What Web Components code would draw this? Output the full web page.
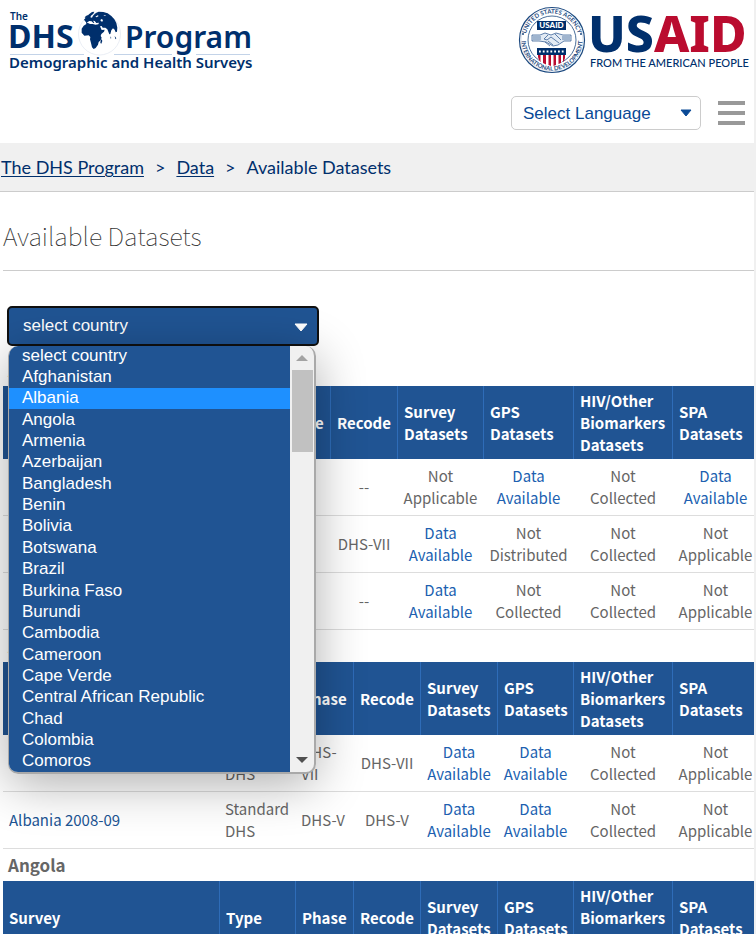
<!DOCTYPE html>
<html lang="en">
<head>
<meta charset="utf-8">
<title>The DHS Program - Available Datasets</title>
<style>
  html { background: #f0f0f0; }
  body { margin: 0 2px 0 0; background: #fff; min-height: 100vh; overflow: hidden; height: 100vh; }
</style>
</head>
<body>
<dhs-page></dhs-page>
<script>
const define = (name, html, setup) => {
  const template = document.createElement('template');
  template.innerHTML = html;
  customElements.define(name, class extends HTMLElement {
    constructor() {
      super();
      this.attachShadow({ mode: 'open' }).append(template.content.cloneNode(true));
    }
    connectedCallback() { if (setup) setup(this, this.shadowRoot); }
  });
};

define('dhs-logo', `
<style>:host{display:block} a{display:block} svg{display:block}</style>
<a href="#" aria-label="The DHS Program">
<svg width="254" height="72" viewBox="0 0 254 72" fill="#002f6c" font-family="'Noto Sans',sans-serif">
  <path d="M10 53.5H84M114 53.5H172M196 53.5H250" stroke="#c3d3e8" fill="none"/>
  <text x="10" y="19" font-size="10" font-weight="600">The</text>
  <text x="8" y="47" font-size="32" font-weight="700">DHS</text>
  <text x="125" y="47" font-size="30" font-weight="600">Program</text>
  <text x="9" y="67" font-size="15" font-weight="600">Demographic and Health Surveys</text>
  <circle cx="99.500" cy="33" r="21" fill="#fff" stroke="#dbe3ee" stroke-width=".6"/>
  <g transform="translate(74 6) scale(.3333)">
    <path d="M30 38l7-8 8-8 9-7 7-1-3 6-7 6-2 5 5 1 3-6 5-5 5-4 7-3 14 1 13 4 11 8 9 10 6 11 3 14-1 12-4 2-3-8-5-4-5 6-3 11-3 1-6-15-6-5-8 0-3-5-5 1 5 11 9-1-2 6-8 7-2 6 3 5-3 8-6 5-2 8-7 10-6 3-5-5-3-13-3-11 1-7-5-5-13 1-8-9 0-12 6-9 8-5-1-5z"/>
    <path d="M38 47l8-5 7 1 5 5 3-1-4-6 5 1 5 6 8-1-2 5-8 1-9-2-8 0-6-3zM79 39l4-3 4 3-2 5-4-1zM64 29l7-4 3 2-6 4zM88 24l8 1-3 2z" fill="#fff"/>
    <path d="M83 96l2 6-3 8-3-2 1-7zM109 88l3 5-2 2zM122 87l5 7-3 3zM32 31l5-5 6-2-3 5-6 4z"/>
  </g>
</svg></a>`);

define('usaid-logo', `
<style>:host{display:block} a{display:block} svg{display:block}</style>
<a href="#" aria-label="USAID">
<svg width="236" height="72" viewBox="0 0 236 72" font-family="Lato,sans-serif">
  <defs>
    <path id="top" d="M7.500 34a26.500 26.500 0 0 1 53 0"/>
    <path id="bottom" d="M3.500 34a30.500 30.500 0 0 0 61 0"/>
  </defs>
  <g fill="none" stroke="#1d4a80">
    <circle cx="34" cy="34" r="32.500" fill="#fff" stroke-width="1.200"/>
    <circle cx="34" cy="34" r="31" stroke="#c6d2e2" stroke-width=".6"/>
    <circle cx="34" cy="34" r="24" stroke-width=".8"/>
  </g>
  <g fill="#1d4a80" font-size="6" font-weight="700" text-anchor="middle">
    <text><textPath href="#top" startOffset="50%">UNITED STATES AGENCY</textPath></text>
    <text><textPath href="#bottom" startOffset="50%">INTERNATIONAL DEVELOPMENT</textPath></text>
    <circle cx="5" cy="28" r="1"/><circle cx="63" cy="28" r="1"/>
  </g>
  <rect x="19" y="15" width="29" height="9" fill="#002f6c"/>
  <text x="33.500" y="22" font-size="8" font-weight="900" fill="#fff" text-anchor="middle">USAID</text>
  <g stroke="#3a6298" stroke-width=".8" fill="#e3ebf4" stroke-linejoin="round">
    <path d="M14 29l8 0 5-2 6 2 5-2 7 2 8 0v6l-7 0-6 4-5 1-7-4-7-1-7 0z"/>
    <path d="M15 31h8M15 33h8M30 29l-4 4 3 1 4-3 8 6M30 35l5 4M27 36l5 4M44 31h8M44 33h8M37 28l6 6" fill="none"/>
  </g>
  <path d="M19 42h29v7H19z" fill="#002f6c"/>
  <path d="M21 45.500h26" stroke="#fff" stroke-width="1.800" stroke-dasharray="1.800 2"/>
  <path d="M20 49h27v3q-1 5-13.500 8.500Q21 57 20 52z" fill="#fff"/>
  <path d="M20 49h2.500v7l-1.500-2-1-3zM25 49h3v9.500l-3-1.500zM30.500 49h2.500v11l-2.500-1zM35.500 49H38v10l-2.500 1zM40.500 49H43v8l-2.500 1zM45 49h2v3l-1 3-1 1z" fill="#ba0c2f"/>
  <text x="70" y="46" font-family="'Noto Sans',sans-serif" font-size="50" font-weight="800" fill="#002f6c">US<tspan fill="#ba0c2f">AID</tspan></text>
  <text x="72" y="61" font-size="11" font-weight="500" fill="#002f6c">FROM THE AMERICAN PEOPLE</text>
</svg></a>`);

define('language-select', `
<style>
  :host{display:grid;width:190px}
  select,svg{grid-area:1/1}
  select{appearance:none;width:100%;height:34px;margin:0;padding:0 40px 0 11px;border:1px solid #ccc;border-radius:5px;background:#fff;color:#0a4a96;font:17px "Liberation Sans",sans-serif}
  svg{place-self:center end;margin-right:9px;pointer-events:none}
</style>
<select aria-label="Language"><option>Select Language</option></select>
<svg width="12" height="8" viewBox="0 0 12 8"><path d="M1 1h10L6 7z" fill="#0a4a96" stroke="#0a4a96" stroke-linejoin="round"/></svg>`);

define('menu-button', `
<style>
  :host{display:block}
  button{display:grid;gap:6px;width:27px;padding:0;border:0;background:none}
  i{height:4px;background:#999}
</style>
<button aria-label="Menu"><i></i><i></i><i></i></button>`);

define('site-header', `
<style>
  :host{display:flex;flex-direction:column;gap:18px;height:143px}
  .logos{display:flex;justify-content:space-between;padding-top:4px}
  .tools{display:flex;justify-content:flex-end;align-items:center;gap:17px;padding-right:9px}
  usaid-logo{margin-top:2px}
  dhs-logo{margin-top:-3px}
</style>
<div class="logos"><dhs-logo></dhs-logo><usaid-logo></usaid-logo></div>
<div class="tools"><language-select></language-select><menu-button></menu-button></div>`);

define('bread-crumbs', `
<style>
  :host{display:block;background:#f0f0f0;border-bottom:1px solid #ccc}
  nav{display:flex;gap:11px;padding:0 1px;font:18px/48px Lato,sans-serif;color:#002f6c}
  a{color:inherit;text-decoration:underline;text-underline-offset:2px;text-decoration-thickness:1px}
</style>
<nav aria-label="Breadcrumb"><a href="#">The DHS Program</a><span>&gt;</span><a href="#">Data</a><span>&gt;</span><span>Available Datasets</span></nav>`);

const countries = ['select country', 'Afghanistan', 'Albania', 'Angola', 'Armenia', 'Azerbaijan', 'Bangladesh', 'Benin', 'Bolivia', 'Botswana', 'Brazil', 'Burkina Faso', 'Burundi', 'Cambodia', 'Cameroon', 'Cape Verde', 'Central African Republic', 'Chad', 'Colombia', 'Comoros'];

define('country-select', `
<style>
  :host{display:block;position:relative;width:312px;font:17px "Liberation Sans",sans-serif}
  .field{display:grid}
  select,.arrow{grid-area:1/1}
  select{appearance:none;width:100%;height:40px;margin:0;padding:0 40px 2px 14px;border:2px solid #101010;border-radius:5px;background:#205493;color:#fff;font:inherit}
  .arrow{place-self:center end;margin-right:11px;padding-top:2px;pointer-events:none}
  .popup{position:absolute;z-index:2;top:100%;left:1px;right:3px;box-sizing:border-box;height:428px;display:flex;overflow:hidden;border:solid #a9a9a9;border-width:0 2px 2px 1px;border-radius:10px;background:#f0f0f0}
  .shade{position:absolute;z-index:1;top:100%;left:1px;right:3px;height:428px;border-radius:10px;box-shadow:0 10px 50px rgba(0,0,0,.32)}
  ul{flex:1;display:grid;grid-auto-rows:1fr;margin:-1px 0 0;padding:0;list-style:none;background:#205493;color:#fff}
  li{display:flex;align-items:center;padding-left:13px;line-height:18px}
  li[aria-selected=true]{background:#1e90ff}
  .bar{width:24px;display:flex;flex-direction:column;align-items:center;box-sizing:border-box;padding:8px 0}
  .thumb{width:21px;height:82px;margin-top:8px;background:#c1c1c1}
  .down{margin-top:auto}
</style>
<div class="field">
  <select aria-label="Country"></select>
  <svg class="arrow" width="14" height="9" viewBox="0 0 14 9"><path d="M1 1h12L7 8z" fill="#fff" stroke="#fff" stroke-linejoin="round"/></svg>
</div>
<div class="shade"></div>
<div class="popup">
  <ul role="listbox" aria-label="Countries"></ul>
  <div class="bar">
    <svg width="12" height="8" viewBox="0 0 12 8"><path d="M0 7h12L6 1z" fill="#a3a3a3"/></svg>
    <div class="thumb"></div>
    <svg class="down" width="12" height="8" viewBox="0 0 12 8"><path d="M0 1h12L6 7z" fill="#505050"/></svg>
  </div>
</div>`, (el, root) => {
  root.querySelector('select').innerHTML = countries.map(c => `<option>${c}</option>`).join('');
  root.querySelector('ul').innerHTML = countries.map(c => `<li role="option" aria-selected="${c === 'Albania'}">${c}</li>`).join('');
});

const cell = v => v === 'DA' ? '<a href="#">Data<br>Available</a>'
  : v === 'NA' ? 'Not<br>Applicable' : v === 'NC' ? 'Not<br>Collected'
  : v === 'ND' ? 'Not<br>Distributed' : v;
const surveys = {
  Afghanistan: { sizes: [58, 67, 86, 90], rows: [
    ['', '', '', '--', 'NA', 'DA', 'NC', 'DA'],
    ['', '', '', 'DHS-VII', 'DA', 'ND', 'NC', 'NA'],
    ['', '', '', '--', 'DA', 'NC', 'NC', 'NA']] },
  Albania: { sizes: [58, 67, 77, 76], rows: [
    ['', 'Standard<br>DHS', 'DHS-<br>VII', 'DHS-VII', 'DA', 'DA', 'NC', 'NA'],
    ['<a href="#">Albania 2008-09</a>', 'Standard<br>DHS', 'DHS-V', 'DHS-V', 'DA', 'DA', 'NC', 'NA']] },
  Angola: { sizes: [58, 67, 77, 76], rows: [] }
};

define('survey-table', `
<style>
  :host{display:block;font:15px/22px "Noto Sans CJK SC","Noto Sans",sans-serif;color:#666}
  h2{margin:0;padding-left:5px;font-size:17px;line-height:32px;font-weight:700;color:#666}
  table{width:100%;table-layout:fixed;border-collapse:separate;border-spacing:0}
  th{height:66px;padding:4px 0 3px 6px;background:#205493;color:#fff;text-align:left;vertical-align:middle;font-weight:700;border-left:1px solid #2e6cb8}
  th:first-child{border-left:0}
  td{height:44px;padding:6px 0 6px 1px;border-bottom:1px solid #ddd;vertical-align:middle;text-align:center}
  td:last-child{padding-left:5px}
  td:nth-child(-n+3){text-align:left;padding-left:6px}
  a{color:#205fb0;text-decoration:none}
  td:first-child a{color:#205493}
</style>
<h2></h2>
<table>
  <colgroup></colgroup>
  <thead><tr><th>Survey</th><th>Type</th><th>Phase</th><th>Recode</th><th>Survey<br>Datasets</th><th>GPS<br>Datasets</th><th>HIV/Other<br>Biomarkers<br>Datasets</th><th>SPA<br>Datasets</th></tr></thead>
  <tbody></tbody>
</table>`, (el, root) => {
  const name = el.getAttribute('country');
  const { sizes, rows } = surveys[name];
  root.querySelector('h2').textContent = name;
  root.querySelector('colgroup').innerHTML = '<col>' + [76, ...sizes, 99, 82].map(w => `<col style="width:${w}px">`).join('');
  root.querySelector('tbody').innerHTML = rows.map(r => `<tr>${r.map(v => `<td>${cell(v)}</td>`).join('')}</tr>`).join('');
});

define('dhs-page', `
<style>
  :host{display:block}
  main{padding-left:3px}
  h1{margin:0;padding-top:8px;border-bottom:1px solid #ccc;font:100 25px/70px "Noto Sans CJK SC","Noto Sans",sans-serif;color:#333}
  country-select{margin:35px 0 8px 4px}
</style>
<site-header></site-header>
<bread-crumbs></bread-crumbs>
<main>
  <h1>Available Datasets</h1>
  <country-select></country-select>
  <survey-table country="Afghanistan"></survey-table>
  <survey-table country="Albania"></survey-table>
  <survey-table country="Angola"></survey-table>
</main>`);
</script>
</body>
</html>
